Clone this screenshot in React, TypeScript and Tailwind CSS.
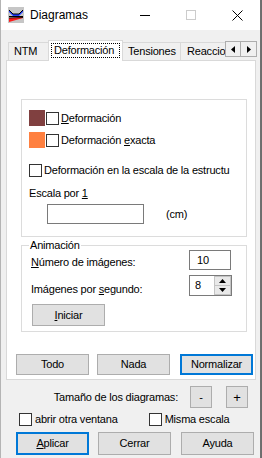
import React from "react";

function Box() {
  return <span className="block w-[13px] h-[13px] shrink-0 border border-[#333333] bg-white" />;
}

function Btn({
  children,
  focus,
  className = "",
}: {
  children: React.ReactNode;
  focus?: boolean;
  className?: string;
}) {
  return (
    <div
      className={
        "flex items-center justify-center shrink-0 bg-[#e1e1e1] " +
        (focus ? "border-2 border-[#0078d7] " : "border border-[#adadad] ") +
        className
      }
    >
      {children}
    </div>
  );
}

function AppIcon() {
  return (
    <svg width="16" height="16" viewBox="0 0 16 16" className="shrink-0">
      <rect x="0" y="0" width="16" height="16" fill="#c6c6c6" />
      <polygon points="1,3 5,7 11,7 15,3 15,5 11,9 5,9 1,5" fill="#1f3cff" />
      <polyline points="1,3 5,7 11,7 15,3" fill="none" stroke="#000" strokeWidth="1" />
      <line x1="1" y1="9.5" x2="15" y2="9.5" stroke="#000" strokeWidth="1" />
      <polygon points="1,11 15,10 15,11 1,15" fill="#ff1a1a" />
      <line x1="1" y1="11" x2="15" y2="10.5" stroke="#000" strokeWidth="0.8" />
    </svg>
  );
}

export default function App() {
  return (
    <div className="flex w-[262px] h-[458px] bg-[#6d6d6d] font-['Liberation_Sans',Arial,sans-serif] text-[11px] leading-[13px] tracking-[-0.2px] text-black overflow-hidden">
      <div className="flex flex-col w-[261px] h-[458px] border-l border-l-[#b4b4b4] border-r border-r-[#707070] bg-[#f0f0f0]">
        {/* title bar */}
        <div className="flex h-[30px] bg-white items-center shrink-0">
          <div className="flex items-center pl-[7px]">
            <AppIcon />
            <span className="ml-[6px] text-[12px] tracking-normal">Diagramas</span>
          </div>
          <div className="ml-auto flex h-full">
            <div className="w-[46px] h-full flex items-center justify-center">
              <span className="block w-[10px] h-px bg-black" />
            </div>
            <div className="w-[46px] h-full flex items-center justify-center">
              <span className="block w-[10px] h-[10px] border border-[#cccccc]" />
            </div>
            <div className="w-[46px] h-full flex items-center justify-center">
              <svg width="11" height="11" viewBox="0 0 11 11">
                <path d="M0.5 0.5 L10.5 10.5 M10.5 0.5 L0.5 10.5" stroke="#000" strokeWidth="1" />
              </svg>
            </div>
          </div>
        </div>

        {/* tabs */}
        <div className="flex items-end h-[20px] mt-[10px] ml-[5px] w-[251px] shrink-0">
          <div className="ml-[2px] w-[41px] h-[18px] border border-b-0 border-[#d9d9d9] flex items-center pl-[5px]">
            NTM
          </div>
          <div className="relative z-10 -mb-px -ml-[1px] w-[75px] h-[21px] bg-white border border-b-0 border-[#d9d9d9] flex items-start pt-[2px] pl-[2px]">
            <span className="block border border-dotted border-black px-[2px] h-[15px] leading-[13px] w-[69px]">
              Deformación
            </span>
          </div>
          <div className="w-[58px] h-[18px] border border-b-0 border-l-0 border-[#d9d9d9] flex items-center pl-[5px]">
            Tensiones
          </div>
          <div className="w-[44px] h-[18px] border-t border-[#d9d9d9] flex items-center pl-[6px] whitespace-nowrap">
            Reaccio
          </div>
          <div className="flex self-start mt-[1px]">
            <div className="w-[16px] h-[16px] bg-[#f0f0f0] border border-[#adadad] flex items-center justify-center">
              <svg width="4" height="7" viewBox="0 0 4 7">
                <polygon points="4,0 0,3.5 4,7" fill="#000" />
              </svg>
            </div>
            <div className="w-[16px] h-[16px] bg-[#f0f0f0] border border-l-0 border-[#adadad] flex items-center justify-center">
              <svg width="4" height="7" viewBox="0 0 4 7">
                <polygon points="0,0 4,3.5 0,7" fill="#000" />
              </svg>
            </div>
          </div>
        </div>

        {/* tab panel */}
        <div className="ml-[5px] w-[250px] h-[320px] bg-white border border-[#d9d9d9] flex flex-col shrink-0">
          {/* group 1 */}
          <div className="ml-[14px] mt-[38px] w-[226px] h-[138px] border border-[#dcdcdc] flex flex-col pl-[7px]">
            <div className="flex items-center mt-[10px]">
              <span className="block w-[16px] h-[16px] bg-[#804040]" />
              <span className="ml-px"><Box /></span>
              <span className="ml-[2px]"><u className="underline-offset-1">D</u>eformación</span>
            </div>
            <div className="flex items-center mt-[6px]">
              <span className="block w-[16px] h-[16px] bg-[#ff8040]" />
              <span className="ml-px"><Box /></span>
              <span className="ml-[2px]">Deformación <u className="underline-offset-1">e</u>xacta</span>
            </div>
            <div className="flex items-center mt-[16px] whitespace-nowrap">
              <Box />
              <span className="ml-[2px]">Deformación en la escala de la estructu</span>
            </div>
            <div className="mt-[10px]">
              Escala por <u className="underline-offset-1">1</u>
            </div>
            <div className="flex items-center mt-[4px]">
              <div className="ml-[18px] w-[97px] h-[20px] border border-[#7a7a7a] bg-white" />
              <span className="ml-[22px]">(cm)</span>
            </div>
          </div>

          {/* group 2 */}
          <div className="relative ml-[14px] mt-[8px] w-[226px] h-[87px] border border-[#dcdcdc] flex flex-col">
            <span className="absolute left-[7px] -top-[7px] bg-white px-px">Animación</span>
            <div className="flex items-start mt-[4px]">
              <span className="ml-[9px] pt-[6px]"><u className="underline-offset-1">N</u>úmero de imágenes:</span>
              <div className="ml-auto mr-[15px] w-[42px] h-[20px] border border-[#7a7a7a] bg-white flex items-center pl-[7px]">
                10
              </div>
            </div>
            <div className="flex items-start mt-[5px]">
              <span className="ml-[9px] pt-[8px]">Imágenes por <u className="underline-offset-1">s</u>egundo:</span>
              <div className="ml-auto mr-[14px] w-[43px] h-[21px] border border-[#7a7a7a] bg-white flex">
                <span className="pl-[5px] pt-[3px] flex-1">8</span>
                <div className="flex flex-col w-[17px] h-full">
                  <div className="flex-1 bg-[#e9e9e9] border border-[#c4c4c4] flex items-center justify-center">
                    <svg width="7" height="4" viewBox="0 0 7 4">
                      <polygon points="0,4 3.5,0 7,4" fill="#000" />
                    </svg>
                  </div>
                  <div className="flex-1 bg-[#e9e9e9] border border-t-0 border-[#c4c4c4] flex items-center justify-center">
                    <svg width="7" height="4" viewBox="0 0 7 4">
                      <polygon points="0,0 3.5,4 7,0" fill="#000" />
                    </svg>
                  </div>
                </div>
              </div>
            </div>
            <Btn className="ml-[10px] mt-[8px] w-[73px] h-[22px]">
              <span><u className="underline-offset-1">I</u>niciar</span>
            </Btn>
          </div>

          {/* panel buttons */}
          <div className="flex mt-[22px] ml-[9px]">
            <Btn className="w-[73px] h-[21px]">Todo</Btn>
            <Btn className="ml-[8px] w-[73px] h-[21px]">Nada</Btn>
            <Btn focus className="ml-[10px] w-[73px] h-[21px]">Normalizar</Btn>
          </div>
        </div>

        {/* size row */}
        <div className="flex items-center justify-end mt-[6px] mr-[12px] shrink-0">
          <span>Tamaño de los diagramas:</span>
          <Btn className="ml-[12px] w-[22px] h-[22px]">-</Btn>
          <Btn className="ml-[14px] w-[22px] h-[22px] text-[13px]">+</Btn>
        </div>

        {/* options */}
        <div className="flex items-center mt-[5px] ml-[18px] shrink-0">
          <Box />
          <span className="ml-[3px]">abrir otra ventana</span>
          <span className="ml-[31px]"><Box /></span>
          <span className="ml-[3px]">Misma escala</span>
        </div>

        {/* dialog buttons */}
        <div className="flex mt-[6px] ml-[15px] shrink-0">
          <Btn focus className="w-[73px] h-[23px]">
            <span><u className="underline-offset-1">A</u>plicar</span>
          </Btn>
          <Btn className="ml-[9px] w-[73px] h-[23px]">Cerrar</Btn>
          <Btn className="ml-[10px] w-[73px] h-[23px]">Ayuda</Btn>
        </div>
      </div>
    </div>
  );
}
